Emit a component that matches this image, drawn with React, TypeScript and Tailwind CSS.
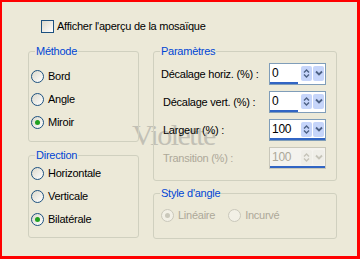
import React from "react";

const font = { fontFamily: '"Liberation Sans", Arial, sans-serif' };

function Radio({ checked, disabled, label }: { checked?: boolean; disabled?: boolean; label: string }) {
  return (
    <div className="flex h-[13px] items-center gap-[4px]">
      <span
        className={`flex h-[13px] w-[13px] items-center justify-center rounded-full border ${
          disabled
            ? "border-[#cac8bb] bg-[#f2f0e6]"
            : "border-[#1c5180] bg-gradient-to-br from-[#dcd9cc] to-white"
        }`}
      >
        {checked && (
          <span
            className={`h-[5px] w-[5px] rounded-full ${disabled ? "bg-[#cac8bb]" : "bg-[#21a121]"}`}
          />
        )}
      </span>
      <span className={disabled ? "text-[#aca899]" : "text-black"}>{label}</span>
    </div>
  );
}

function SpinBox({ value, full, disabled }: { value: string; full?: boolean; disabled?: boolean }) {
  const arrow = disabled ? "#c5c3b8" : "#4d6185";
  return (
    <div
      className={`flex h-[22px] w-[57px] flex-col border ${
        disabled ? "border-[#c9c7ba] bg-[#f4f3ee]" : "border-[#7f9db9] bg-white"
      }`}
    >
      <div className="flex flex-1 items-center pl-[2px] pr-[1px]">
        <span className={`flex-1 text-[12px] ${disabled ? "text-[#aca899]" : "text-black"}`}>
          {value}
        </span>
        <span
          className={`mr-[1px] flex h-[15px] w-[11px] items-center justify-center rounded-[2px] ${
            disabled ? "bg-[#efeee8]" : "bg-[#c6d5fa]"
          }`}
        >
          <svg width="7" height="11" viewBox="0 0 7 11">
            <path d="M1 4.5 L3.5 2 L6 4.5" fill="none" stroke={arrow} strokeWidth="1.4" />
            <path d="M1 6.5 L3.5 9 L6 6.5" fill="none" stroke={arrow} strokeWidth="1.4" />
          </svg>
        </span>
        <span
          className={`flex h-[15px] w-[11px] items-center justify-center rounded-[2px] ${
            disabled ? "bg-[#efeee8]" : "bg-[#c6d5fa]"
          }`}
        >
          <svg width="8" height="6" viewBox="0 0 8 6">
            <path d="M1 1.5 L4 4.5 L7 1.5" fill="none" stroke={arrow} strokeWidth="1.8" />
          </svg>
        </span>
      </div>
      <div className={`h-[3px] bg-[#3165c4] ${full ? "w-full" : "w-1/2"}`} />
    </div>
  );
}

function Group({
  title,
  className,
  children,
}: {
  title: string;
  className: string;
  children: React.ReactNode;
}) {
  return (
    <fieldset className={`rounded-[3px] border border-[#d0d0bf] ${className}`}>
      <legend className="ml-[6px] px-[1px] leading-[13px] text-[#0046d5]">{title}</legend>
      {children}
    </fieldset>
  );
}

const rows = [
  { label: "Décalage horiz. (%) :", value: "0", indent: "" },
  { label: "Décalage vert. (%) :", value: "0", indent: "pl-[2px]" },
  { label: "Largeur (%) :", value: "100", indent: "pl-[2px]", full: true },
  { label: "Transition (%) :", value: "100", indent: "pl-[2px]", full: true, disabled: true },
];

export default function App() {
  return (
    <div
      className="relative h-[259px] w-[360px] overflow-hidden border-b-[3px] border-l-2 border-r-[3px] border-t-2 border-[#ff0000] bg-[#ece9d8] text-[11px] tracking-[-0.25px] text-black"
      style={font}
    >
      {/* watermark, painted under the controls */}
      <span
        className="pointer-events-none absolute left-[130px] top-[118px] text-[30px] leading-none tracking-[-1.5px] text-[#c2c0b5]"
        style={{ fontFamily: '"Liberation Serif", "Times New Roman", serif' }}
      >
        Violette
      </span>

      {/* checkbox */}
      <div className="relative flex items-center gap-[3px] pl-[39px] pt-[18px]">
        <span className="h-[13px] w-[13px] border border-[#1c5180] bg-gradient-to-br from-[#dcd9cc] to-white" />
        <span className="leading-[13px]">Afficher l'aperçu de la mosaïque</span>
      </div>

      <div className="relative mt-[12px] flex gap-[14px] pl-[26px]">
        {/* left column */}
        <div className="flex w-[111px] flex-col gap-[7px]">
          <Group title="Méthode" className="h-[97px]">
            <div className="flex flex-col gap-[10px] pl-[2px] pt-[12px]">
              <Radio label="Bord" />
              <Radio label="Angle" />
              <Radio label="Miroir" checked />
            </div>
          </Group>
          <Group title="Direction" className="h-[89px]">
            <div className="flex flex-col gap-[10px] pl-[2px] pt-[5px]">
              <Radio label="Horizontale" />
              <Radio label="Verticale" />
              <Radio label="Bilatérale" checked />
            </div>
          </Group>
        </div>

        {/* right column */}
        <div className="flex w-[184px] flex-col gap-[6px]">
          <Group title="Paramètres" className="h-[136px]">
            <div className="flex flex-col gap-[6px] pl-[7px] pr-[10px] pt-[5px]">
              {rows.map((r) => (
                <div key={r.label} className={`flex items-center justify-between ${r.indent}`}>
                  <span className={r.disabled ? "text-[#aca899]" : ""}>{r.label}</span>
                  <SpinBox value={r.value} full={r.full} disabled={r.disabled} />
                </div>
              ))}
            </div>
          </Group>
          <Group title="Style d'angle" className="h-[52px]">
            <div className="flex gap-[13px] pl-[7px] pt-[9px]">
              <Radio label="Linéaire" checked disabled />
              <Radio label="Incurvé" disabled />
            </div>
          </Group>
        </div>
      </div>
    </div>
  );
}
